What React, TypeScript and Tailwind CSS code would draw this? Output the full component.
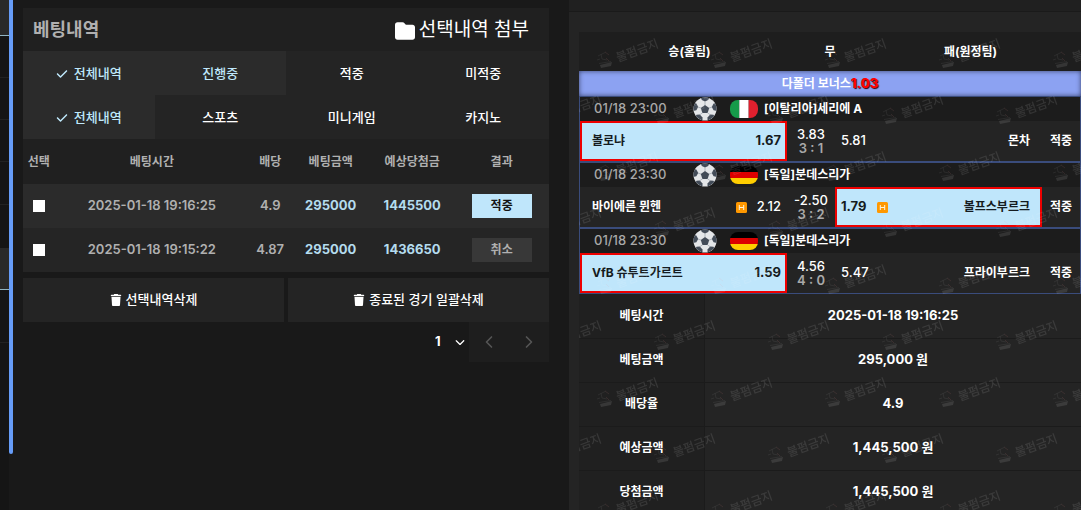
import React from 'react'
import { FaCheck, FaFolder, FaTrash, FaChevronDown } from 'react-icons/fa6'
import { FiChevronLeft, FiChevronRight } from 'react-icons/fi'

const statusTabs = [
    { name: '전체내역', checked: true, active: true },
    { name: '진행중', checked: false, active: true },
    { name: '적중', checked: false, active: false },
    { name: '미적중', checked: false, active: false },
]

const gameTabs = [
    { name: '전체내역', checked: true, active: true },
    { name: '스포츠', checked: false, active: false },
    { name: '미니게임', checked: false, active: false },
    { name: '카지노', checked: false, active: false },
]

const bets = [
    { id: '1', date: '2025-01-18 19:16:25', odds: '4.9', amount: '295000', payout: '1445500', result: '적중', won: true },
    { id: '2', date: '2025-01-18 19:15:22', odds: '4.87', amount: '295000', payout: '1436650', result: '취소', won: false },
]

const matches = [
    {
        id: '1',
        date: '01/18 23:00',
        country: 'italy',
        league: '[이탈리아]세리에 A',
        home: '볼로냐',
        homeOdds: '1.67',
        draw: '3.83',
        score: '3 : 1',
        away: '몬차',
        awayOdds: '5.81',
        pick: 'home',
        handicap: false,
    },
    {
        id: '2',
        date: '01/18 23:30',
        country: 'germany',
        league: '[독일]분데스리가',
        home: '바이에른 뮌헨',
        homeOdds: '2.12',
        draw: '-2.50',
        score: '3 : 2',
        away: '볼프스부르크',
        awayOdds: '1.79',
        pick: 'away',
        handicap: true,
    },
    {
        id: '3',
        date: '01/18 23:30',
        country: 'germany',
        league: '[독일]분데스리가',
        home: 'VfB 슈투트가르트',
        homeOdds: '1.59',
        draw: '4.56',
        score: '4 : 0',
        away: '프라이부르크',
        awayOdds: '5.47',
        pick: 'home',
        handicap: false,
    },
]

const summary = [
    { label: '베팅시간', value: '2025-01-18 19:16:25' },
    { label: '베팅금액', value: '295,000 원' },
    { label: '배당율', value: '4.9' },
    { label: '예상금액', value: '1,445,500 원' },
    { label: '당첨금액', value: '1,445,500 원' },
]

const Ball = () => (
    <svg className="h-6 w-6 shrink-0" viewBox="0 0 24 24">
        <defs>
            <clipPath id="ball"><circle cx="12" cy="12" r="11.5" /></clipPath>
        </defs>
        <circle cx="12" cy="12" r="11.5" fill="#e4e6e8" />
        <g clipPath="url(#ball)" fill="#434c58">
            <path d="M12 8l4.200 3-1.600 4.900H9.400L7.800 11z" />
            <path d="M7.500 0h9l-1.300 3L12 4.600 8.800 3z" />
            <path d="M24 6v8l-3.400-.8-1.800-3.200 1.800-3.600z" />
            <path d="M0 6v8l3.400-.8L5.200 10 3.400 6.400z" />
            <path d="M21.500 19.500l-7 4.500v-3.600l2.700-2.900 3.300.2z" />
            <path d="M2.500 19.500l7 4.500v-3.600l-2.700-2.900-3.300.2z" />
        </g>
        <path d="M12 4.600v3.600M19 10l-3 1.100M5 10l3 1.100M14.500 15.800l2.700 2M9.500 15.800l-2.700 2" stroke="#9aa1aa" strokeWidth="0.7" />
    </svg>
)

const Flag = ({ country }: { country: string }) => (
    <svg className="h-[18px] w-7 shrink-0" viewBox="0 0 28 18" role="img" aria-label={country}>
        <defs>
            <clipPath id="flag"><rect width="28" height="18" rx="8" /></clipPath>
        </defs>
        {country === 'italy' ? (
            <g clipPath="url(#flag)">
                <rect width="9.3" height="18" fill="#169b4a" />
                <rect x="9.3" width="9.4" height="18" fill="#fff" />
                <rect x="18.7" width="9.3" height="18" fill="#e0202e" />
            </g>
        ) : (
            <g clipPath="url(#flag)">
                <rect width="28" height="6" fill="#000" />
                <rect y="6" width="28" height="6" fill="#dd0000" />
                <rect y="12" width="28" height="6" fill="#ffce00" />
            </g>
        )}
    </svg>
)

const Handicap = () => (
    <svg className="h-[11px] w-[11px] shrink-0" viewBox="0 0 11 11">
        <rect width="11" height="11" rx="1.5" fill="#ff9800" />
        <path d="M3.300 3v5M7.700 3v5M3.300 5.500h4.400" stroke="#fff4dc" strokeWidth="1" fill="none" />
    </svg>
)

const Stamp = () => (
    <g>
        <path d="M2 8l8-4M5 6l1 5 5 1M1 12l3-1M3 15.500l12-2" stroke="#fff" strokeWidth="1" fill="none" opacity="0.6" />
        <path d="M4 17l12-3-1 4-10 2z" fill="#fff" />
        <path d="M9 4l4 3M10 10l3 3" stroke="#f99" strokeWidth="1" />
        <text x="22" y="14" transform="rotate(-20 22 14)" fontSize="12" fontWeight="500" fill="#fff">불펌금지</text>
    </g>
)

const Watermark = () => (
    <svg className="pointer-events-none absolute inset-0 h-full w-full opacity-10" aria-hidden="true">
        <defs>
            <pattern id="mark" width="114" height="113" patternUnits="userSpaceOnUse">
                <g transform="translate(17 16)"><Stamp /></g>
                <g transform="translate(74 72)"><Stamp /></g>
                <g transform="translate(-40 72)"><Stamp /></g>
            </pattern>
        </defs>
        <rect width="100%" height="100%" fill="url(#mark)" />
    </svg>
)

const Tabs = ({ items }: { items: typeof statusTabs }) => (
    <div className="grid h-11 grid-cols-4 bg-[#242424] text-[13px] font-medium">
        {items.map((item) => (
            <button
                key={item.name}
                className={`flex items-center justify-center gap-1.5 pt-0.5 ${item.active ? 'bg-[#2b2b2b] text-[#bfe8fb]' : 'text-white'}`}
            >
                {item.checked && <FaCheck className="h-3 w-3" />}
                {item.name}
            </button>
        ))}
    </div>
)

const Match = ({ match }: { match: typeof matches[number] }) => {
    const picked = 'border-2 border-[#ee0000] bg-[#bfe6fb] text-[#151b20]'
    const plain = 'border-2 border-transparent text-white'
    const homePicked = match.pick === 'home'

    return (
        <div className="border border-[#3a4c7c]">
            <div className="flex h-6 items-center bg-[#1c1c1c] pl-3.5">
                <p className="w-[99px] text-[13px] font-medium text-[#a9a9a9]">{match.date}</p>
                <Ball />
                <div className="w-[13px]"></div>
                <Flag country={match.country} />
                <p className="pl-1.5 text-xs font-bold text-white">{match.league}</p>
            </div>
            <div className="flex h-10 bg-[#242424] text-xs font-bold">
                <button className={`flex min-w-0 flex-1 items-center gap-2.5 pr-1 pl-2.5 ${homePicked ? picked : plain}`}>
                    <span className="mr-auto">{match.home}</span>
                    {match.handicap && <Handicap />}
                    <span className={homePicked ? 'text-[13px]' : 'text-[13px] font-medium'}>{match.homeOdds}</span>
                </button>
                <div className="flex w-12 flex-col items-center justify-center text-[13px] leading-[14px] font-medium">
                    <p className="text-white">{match.draw}</p>
                    <p className="font-semibold text-[#a9a9a9]">{match.score}</p>
                </div>
                <button className={`flex min-w-0 flex-1 items-center gap-2.5 pr-2.5 pl-1 ${homePicked ? plain : picked}`}>
                    <span className={homePicked ? 'text-[13px] font-medium' : 'text-[13px]'}>{match.awayOdds}</span>
                    {match.handicap && <Handicap />}
                    <span className="ml-auto">{match.away}</span>
                </button>
                <p className="flex w-[38px] items-center justify-center text-white">적중</p>
            </div>
        </div>
    )
}

const BetList = () => (
    <section className="pt-2 pr-5 pl-2.5">
        <div className="flex h-[43px] items-center justify-between bg-[#202020] pr-5 pl-2.5">
            <h1 className="text-lg font-bold text-[#b0b0b0]">베팅내역</h1>
            <button className="flex items-center gap-1 pt-0.5 text-[19px] text-white">
                <FaFolder className="h-5 w-5" />
                선택내역 첨부
            </button>
        </div>
        <Tabs items={statusTabs} />
        <Tabs items={gameTabs} />
        <table className="w-full table-fixed text-center text-xs font-bold text-[#b0b0b0]">
            <thead>
                <tr className="h-[45px] bg-[#202020]">
                    <th className="w-[6%]">선택</th>
                    <th className="w-[37%]">베팅시간</th>
                    <th className="w-[8%]">배당</th>
                    <th className="w-[15%]">베팅금액</th>
                    <th className="w-[16%]">예상당첨금</th>
                    <th>결과</th>
                </tr>
            </thead>
            <tbody>
                {bets.map((bet) => (
                    <tr key={bet.id} className={bet.won ? 'h-11 bg-[#2b2b2b]' : 'h-11 bg-[#252525]'}>
                        <td>
                            <input
                                type="checkbox"
                                aria-label={bet.date}
                                className="mx-auto block h-3 w-3 appearance-none bg-white"
                            />
                        </td>
                        <td className="text-[13px] font-semibold">{bet.date}</td>
                        <td className="text-[13px] font-semibold">{bet.odds}</td>
                        <td className="text-[13px] text-[#b4dcee]">{bet.amount}</td>
                        <td className="text-[13px] text-[#b4dcee]">{bet.payout}</td>
                        <td>
                            <span
                                className={`mx-auto block h-6 w-[60px] leading-6 ${bet.won ? 'bg-[#bfe6fb] text-[#151515]' : 'bg-[#383838]'}`}
                            >
                                {bet.result}
                            </span>
                        </td>
                    </tr>
                ))}
            </tbody>
        </table>
        <div className="mt-1.5 grid grid-cols-2 gap-1 text-[13px] font-medium text-white">
            <button className="flex h-11 items-center justify-center gap-1 bg-[#242424]">
                <FaTrash className="h-3 w-3" />
                선택내역삭제
            </button>
            <button className="flex h-11 items-center justify-center gap-1 bg-[#242424]">
                <FaTrash className="h-3 w-3" />
                종료된 경기 일괄삭제
            </button>
        </div>
        <div className="flex h-10 justify-end">
            <div className="relative flex items-center">
                <select aria-label="페이지" className="w-[34px] appearance-none bg-transparent text-[13px] font-bold text-white">
                    <option>1</option>
                </select>
                <FaChevronDown className="pointer-events-none absolute right-1 h-2.5 w-2.5 text-white" />
            </div>
            <button className="flex w-10 items-center justify-center bg-[#1e1e1e] text-[#555]" aria-label="이전">
                <FiChevronLeft className="h-5 w-5" />
            </button>
            <button className="flex w-10 items-center justify-center bg-[#1e1e1e] text-[#555]" aria-label="다음">
                <FiChevronRight className="h-5 w-5" />
            </button>
        </div>
    </section>
)

const BetDetail = () => (
    <section className="bg-[#242424]">
        <div className="h-3 border-b border-[#1a1a1a] bg-[#202020]"></div>
        <div className="relative mt-5 ml-2.5 bg-[#1e1e1e] text-xs font-bold text-white">
            <div className="flex h-[39px] items-center text-center">
                <p className="w-[44%]">승(홈팀)</p>
                <p className="w-[12%]">무</p>
                <p className="w-[44%]">패(원정팀)</p>
            </div>
            <p className="relative z-10 h-[25px] bg-[#8ca2f2] text-center leading-6 shadow-[inset_0_0_5px_#39436d]">
                다폴더 보너스<span className="text-[13px] font-extrabold text-[#ff0000] [text-shadow:1px_1px_1px_#400000]">1.03</span>
            </p>
            {matches.map((match) => (
                <Match key={match.id} match={match} />
            ))}
            <table className="w-full table-fixed text-center">
                <tbody>
                    {summary.map((item) => (
                        <tr key={item.label} className="h-11 border-b border-[#1b1b1b]">
                            <th className="w-1/4 border-r border-[#1b1b1b] bg-[#202020]">{item.label}</th>
                            <td className="bg-[#242424] text-[13px]">{item.value}</td>
                        </tr>
                    ))}
                </tbody>
            </table>
            <Watermark />
        </div>
    </section>
)

const Sidebar = () => (
    <aside className="w-[9px] shrink-0 bg-[#151515]">
        <div className="h-9 border-b border-[#91b5c3] bg-[#292929]"></div>
        <div className="h-[42px] border-b border-[#222]"></div>
        <div className="h-[42px] border-b border-[#222]"></div>
        <div className="h-[42px] border-b border-[#222]"></div>
        <div className="h-[43px] border-b border-[#222]"></div>
        <div className="h-[43px]"></div>
        <div className="h-[42px] border-b border-[#91b5c3] bg-[#292929]"></div>
        <div className="h-[53px] border-b border-[#222]"></div>
    </aside>
)

export default function App() {
    return (
        <div className="flex h-screen overflow-hidden bg-[#191919] font-['Inter','Noto_Sans_CJK_KR',sans-serif]">
            <Sidebar />
            <div className="h-[89%] w-1 shrink-0 rounded-b bg-[#669cf8]"></div>
            <main className="grid flex-1 grid-cols-[556fr_512fr]">
                <BetList />
                <BetDetail />
            </main>
        </div>
    )
}
